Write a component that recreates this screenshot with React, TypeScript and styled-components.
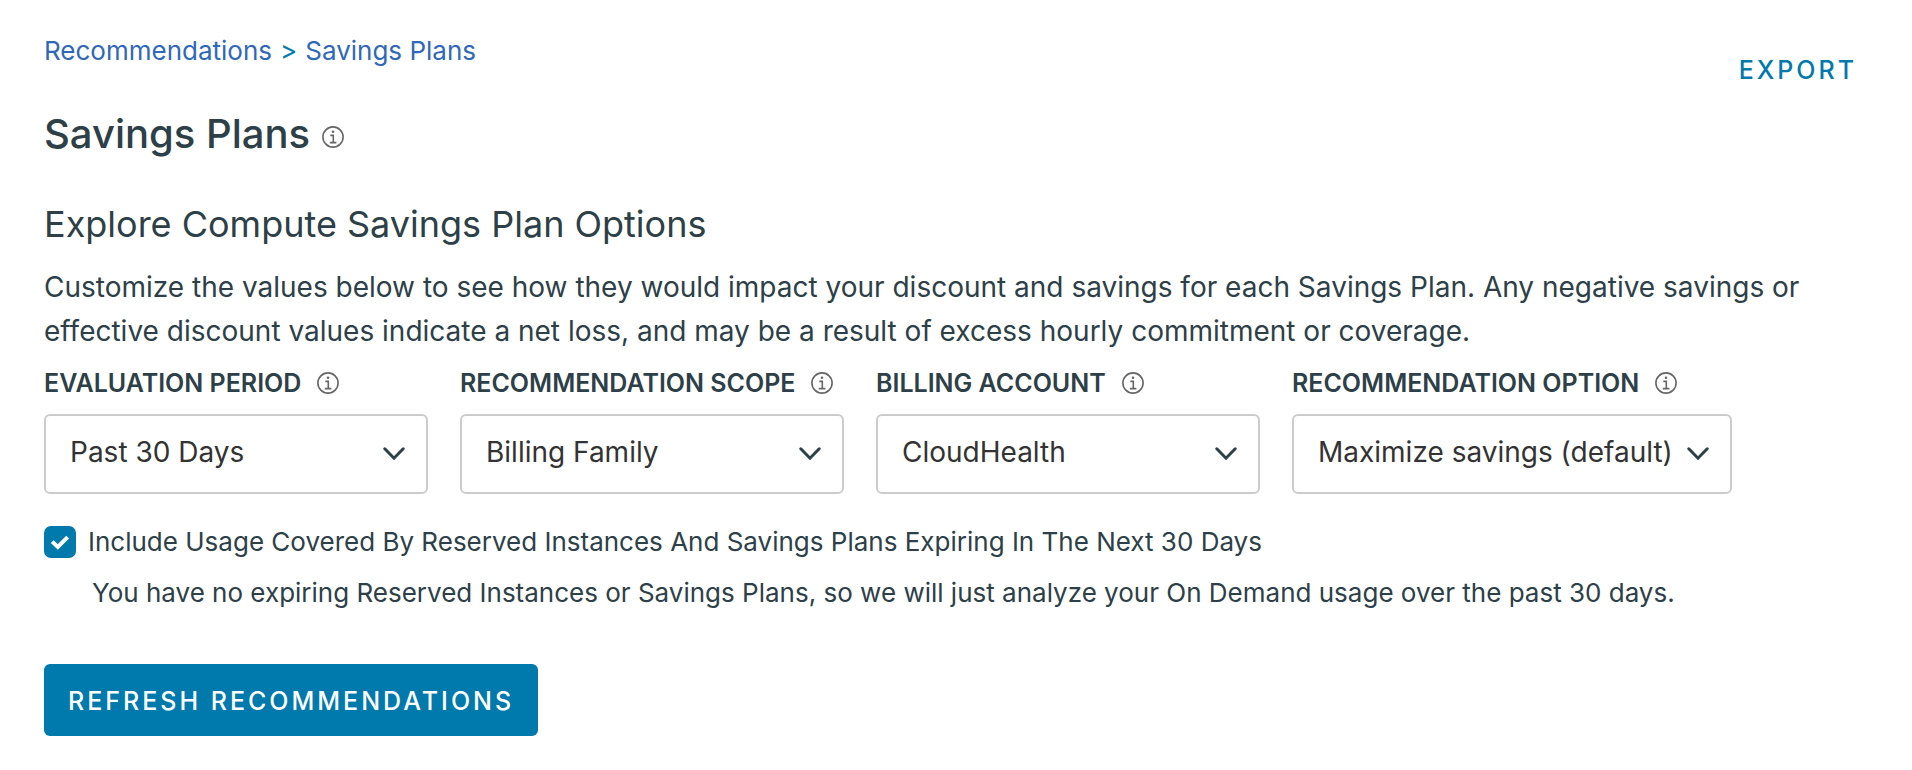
import React, { useId, useState } from "react";
import styled, { createGlobalStyle } from "styled-components";

const ink = "#2d4048";
const action = "#0079ad";

const GlobalStyle = createGlobalStyle`
  *, *::before, *::after { box-sizing: border-box; }
  body {
    margin: 0;
    background: #fff;
    color: ${ink};
    font-family: Inter, "Liberation Sans", sans-serif;
  }
  button, select, input { font-family: inherit; margin: 0; }
`;

const Page = styled.main`
  padding: 31px 55px 34px 44px;
`;

const TopBar = styled.header`
  display: flex;
  justify-content: space-between;
  align-items: flex-start;
`;

const Breadcrumb = styled.nav`
  display: flex;
  gap: 8px;
  font-size: 26px;
  line-height: 40px;
  color: ${action};
`;

const Crumb = styled.a`
  color: #2f68b8;
  text-decoration: none;
`;

const ExportButton = styled.button`
  margin-top: 19px;
  padding: 0;
  border: 0;
  background: none;
  color: ${action};
  font-size: 25px;
  font-weight: 500;
  line-height: 40px;
  letter-spacing: 3px;
  cursor: pointer;
`;

const TitleRow = styled.div`
  display: flex;
  align-items: baseline;
  gap: 12px;
  margin-top: 20px;
`;

const Title = styled.h1`
  margin: 0;
  font-size: 40px;
  font-weight: 500;
  line-height: 48px;
`;

const Subtitle = styled.h2`
  margin: 44px 0 0;
  font-size: 36px;
  font-weight: 400;
  line-height: 44px;
`;

const Description = styled.p`
  margin: 19px 0 0;
  max-width: 1780px;
  font-size: 28px;
  line-height: 44px;
`;

const Filters = styled.div`
  display: flex;
  flex-wrap: wrap;
  gap: 32px;
  margin-top: 14px;
`;

const Field = styled.div<{ $wide?: boolean }>`
  flex: 0 1 ${(p) => (p.$wide ? 440 : 384)}px;
`;

const LabelRow = styled.div`
  display: flex;
  align-items: center;
  gap: 16px;
  line-height: 32px;
  white-space: nowrap;
`;

const Label = styled.label`
  font-size: 25px;
  font-weight: 600;
`;

const SelectBox = styled.div`
  display: grid;
  align-items: center;
  margin-top: 15px;
  & > * { grid-area: 1 / 1; }
`;

const Select = styled.select`
  appearance: none;
  width: 100%;
  height: 80px;
  padding: 0 48px 4px 24px;
  border: 2px solid #ccc;
  border-radius: 6px;
  background: #fff;
  color: #333;
  font-size: 28px;
`;

const Chevron = styled.svg`
  justify-self: end;
  margin-right: 23px;
  pointer-events: none;
`;

const CheckRow = styled.div`
  display: flex;
  align-items: center;
  gap: 12px;
  margin-top: 32px;
`;

const CheckBox = styled.span`
  display: grid;
  place-items: center;
  & > * { grid-area: 1 / 1; }
`;

const CheckInput = styled.input`
  appearance: none;
  width: 32px;
  height: 32px;
  border: 2px solid ${action};
  border-radius: 7px;
  background: #fff;
  &:checked { background: ${action}; }
`;

const CheckMark = styled.svg`
  pointer-events: none;
`;

const CheckLabel = styled.label`
  font-size: 26px;
  line-height: 32px;
`;

const Note = styled.p`
  margin: 19px 0 0 48px;
  font-size: 26px;
  line-height: 32px;
`;

const RefreshButton = styled.button`
  height: 72px;
  margin-top: 55px;
  padding: 2px 24px 0;
  border: 0;
  border-radius: 6px;
  background: ${action};
  color: #fff;
  font-size: 25px;
  font-weight: 500;
  letter-spacing: 3px;
  cursor: pointer;
`;

const InfoSvg = styled.svg`
  flex: none;
`;

function InfoIcon() {
  return (
    <InfoSvg width="22" height="22" viewBox="0 0 22 22" fill="none" stroke="#666" strokeWidth="1.6" role="img" aria-label="More information">
      <circle cx="11" cy="11" r="10.1" />
      <circle cx="11" cy="5.7" r="1.3" fill="#666" stroke="none" />
      <path d="M8.3 9.4h3v7M7.8 16.6h6.6" />
    </InfoSvg>
  );
}

interface FilterProps {
  label: string;
  options: string[];
  wide?: boolean;
}

function Filter({ label, options, wide }: FilterProps) {
  const id = useId();
  return (
    <Field $wide={wide}>
      <LabelRow>
        <Label htmlFor={id}>{label}</Label>
        <InfoIcon />
      </LabelRow>
      <SelectBox>
        <Select id={id} defaultValue={options[0]}>
          {options.map((o) => (
            <option key={o}>{o}</option>
          ))}
        </Select>
        <Chevron width="22" height="14" viewBox="0 0 22 14" fill="none" stroke={ink} strokeWidth="3" strokeLinecap="round" aria-hidden="true">
          <path d="M1.8 1.8L11 11.2L20.2 1.8" />
        </Chevron>
      </SelectBox>
    </Field>
  );
}

export default function App() {
  const [include, setInclude] = useState(true);
  return (
    <>
      <GlobalStyle />
      <Page>
        <TopBar>
          <Breadcrumb aria-label="Breadcrumb">
            <Crumb href="#recommendations">Recommendations</Crumb>
            <span>&gt;</span>
            <Crumb href="#savings-plans">Savings Plans</Crumb>
          </Breadcrumb>
          <ExportButton type="button">EXPORT</ExportButton>
        </TopBar>
        <TitleRow>
          <Title>Savings Plans</Title>
          <InfoIcon />
        </TitleRow>
        <Subtitle>Explore Compute Savings Plan Options</Subtitle>
        <Description>
          Customize the values below to see how they would impact your discount and savings for each
          Savings Plan. Any negative savings or effective discount values indicate a net loss, and may
          be a result of excess hourly commitment or coverage.
        </Description>
        <Filters>
          <Filter label="EVALUATION PERIOD" options={["Past 30 Days"]} />
          <Filter label="RECOMMENDATION SCOPE" options={["Billing Family"]} />
          <Filter label="BILLING ACCOUNT" options={["CloudHealth"]} />
          <Filter label="RECOMMENDATION OPTION" options={["Maximize savings (default)"]} wide />
        </Filters>
        <CheckRow>
          <CheckBox>
            <CheckInput
              id="include-expiring"
              type="checkbox"
              checked={include}
              onChange={(e) => setInclude(e.target.checked)}
            />
            <CheckMark width="20" height="16" viewBox="0 0 20 16" fill="none" stroke="#fff" strokeWidth="4" aria-hidden="true">
              <path d="M2.2 7.6L7.8 13L17.6 3.2" />
            </CheckMark>
          </CheckBox>
          <CheckLabel htmlFor="include-expiring">
            Include Usage Covered By Reserved Instances And Savings Plans Expiring In The Next 30 Days
          </CheckLabel>
        </CheckRow>
        <Note>
          You have no expiring Reserved Instances or Savings Plans, so we will just analyze your On
          Demand usage over the past 30 days.
        </Note>
        <RefreshButton type="button">REFRESH RECOMMENDATIONS</RefreshButton>
      </Page>
    </>
  );
}
